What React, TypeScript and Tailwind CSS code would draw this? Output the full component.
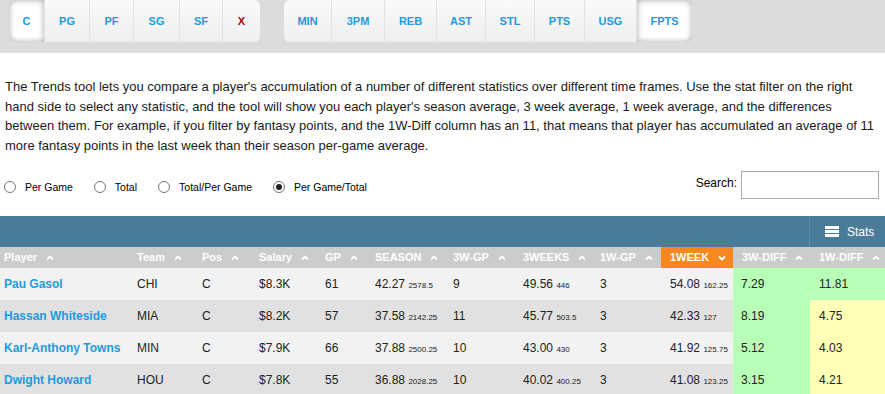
import React from "react";

type Row = {
  name: string;
  team: string;
  pos: string;
  salary: string;
  gp: string;
  season: [string, string];
  gp3: string;
  weeks3: [string, string];
  gp1: string;
  week1: [string, string];
  diff3: string;
  diff1: string;
  diff1Hot: boolean;
};

const rows: Row[] = [
  { name: "Pau Gasol", team: "CHI", pos: "C", salary: "$8.3K", gp: "61", season: ["42.27", "2578.5"], gp3: "9", weeks3: ["49.56", "446"], gp1: "3", week1: ["54.08", "162.25"], diff3: "7.29", diff1: "11.81", diff1Hot: true },
  { name: "Hassan Whiteside", team: "MIA", pos: "C", salary: "$8.2K", gp: "57", season: ["37.58", "2142.25"], gp3: "11", weeks3: ["45.77", "503.5"], gp1: "3", week1: ["42.33", "127"], diff3: "8.19", diff1: "4.75", diff1Hot: false },
  { name: "Karl-Anthony Towns", team: "MIN", pos: "C", salary: "$7.9K", gp: "66", season: ["37.88", "2500.25"], gp3: "10", weeks3: ["43.00", "430"], gp1: "3", week1: ["41.92", "125.75"], diff3: "5.12", diff1: "4.03", diff1Hot: false },
  { name: "Dwight Howard", team: "HOU", pos: "C", salary: "$7.8K", gp: "55", season: ["36.88", "2028.25"], gp3: "10", weeks3: ["40.02", "400.25"], gp1: "3", week1: ["41.08", "123.25"], diff3: "3.15", diff1: "4.21", diff1Hot: false },
];

const positions = [
  { label: "C", w: "w-[36px]", active: true },
  { label: "PG", w: "w-[45px]" },
  { label: "PF", w: "w-[44px]" },
  { label: "SG", w: "w-[46px]" },
  { label: "SF", w: "w-[43px]" },
  { label: "X", w: "w-[37px]", red: true },
];

const stats = [
  { label: "MIN", w: "w-[48px]" },
  { label: "3PM", w: "w-[53px]" },
  { label: "REB", w: "w-[52px]" },
  { label: "AST", w: "w-[49px]" },
  { label: "STL", w: "w-[49px]" },
  { label: "PTS", w: "w-[50px]" },
  { label: "USG", w: "w-[52px]" },
  { label: "FPTS", w: "w-[55px]", active: true },
];

const headers = ["Player", "Team", "Pos", "Salary", "GP", "SEASON", "3W-GP", "3WEEKS", "1W-GP", "1WEEK", "3W-DIFF", "1W-DIFF"];

const grid = "grid grid-cols-[128px_65px_57px_66px_50px_78px_70px_77px_70px_72px_77px_75px]";

function Caret({ down }: { down?: boolean }) {
  return (
    <svg width="8" height="6" viewBox="0 0 8 6" className="ml-[9px] shrink-0">
      <path d={down ? "M1 1.5 L4 4.5 L7 1.5" : "M1 4.5 L4 1.5 L7 4.5"} fill="none" stroke="white" strokeWidth="1.8" />
    </svg>
  );
}

function FilterButton({ label, w, active, red, first, last }: { label: string; w: string; active?: boolean; red?: boolean; first?: boolean; last?: boolean }) {
  return (
    <div
      className={`${w} h-full flex items-center justify-center text-[11px] font-bold ${red ? "text-[#b30000]" : "text-[#1e9ae0]"} ${
        active ? "bg-white shadow-[inset_0_0_6px_rgba(0,0,0,0.35)]" : "bg-gradient-to-b from-[#fafafa] to-[#efefef]"
      } ${first ? "rounded-l-[6px]" : ""} ${last ? "rounded-r-[6px]" : ""} ${!last ? "border-r border-[#e2e2e2]" : ""}`}
    >
      {label}
    </div>
  );
}

function Val({ v }: { v: [string, string] }) {
  return (
    <span>
      {v[0]} <span className="text-[8px]">{v[1]}</span>
    </span>
  );
}

export default function App() {
  return (
    <div className="w-[885px] h-[394px] overflow-hidden bg-white font-['Liberation_Sans',Arial,sans-serif] text-[#222]">
      {/* filter bar */}
      <div className="h-[53px] bg-[#dcdcdc] flex items-start pl-[9px]">
        <div className="flex h-[42px]">
          {positions.map((p, i) => (
            <FilterButton key={p.label} {...p} first={i === 0} last={i === positions.length - 1} />
          ))}
        </div>
        <div className="flex h-[42px] ml-[24px]">
          {stats.map((s, i) => (
            <FilterButton key={s.label} {...s} first={i === 0} last={i === stats.length - 1} />
          ))}
        </div>
      </div>

      {/* description */}
      <p className="mt-[24px] px-[5px] text-[13px] leading-[19.5px] text-[#1a1a1a]">
        The Trends tool lets you compare a player's accumulation of a number of different statistics over different time frames. Use the stat filter on the right hand side to select any statistic, and the tool will show you each player's season average, 3 week average, 1 week average, and the differences between them. For example, if you filter by fantasy points, and the 1W-Diff column has an 11, that means that player has accumulated an average of 11 more fantasy points in the last week than their season per-game average.
      </p>

      {/* options */}
      <div className="flex items-center justify-between mt-[16px] h-[28px] pr-[6px]">
        <div className="flex items-center gap-[21px] text-[10.5px] text-black pl-[4px] mt-[3px]">
          {["Per Game", "Total", "Total/Per Game", "Per Game/Total"].map((l, i) => (
            <label key={l} className="flex items-center">
              <span className="w-[12px] h-[12px] rounded-full border border-[#777] bg-white flex items-center justify-center">
                {i === 3 && <span className="w-[6px] h-[6px] rounded-full bg-[#222]" />}
              </span>
              <span className="ml-[9px] mt-[2px]">{l}</span>
            </label>
          ))}
        </div>
        <div className="flex items-center text-[12px] text-black">
          <span className="mr-[4px] mb-[4px]">Search:</span>
          <div className="w-[138px] h-[28px] border border-[#aaa] bg-white" />
        </div>
      </div>

      {/* table toolbar */}
      <div className="mt-[17px] h-[31px] bg-[#4a7c99] flex justify-end">
        <div className="w-[76px] border-l border-[#5f8da8] flex items-center pl-[15px] text-white text-[12px]">
          <svg width="14" height="11" viewBox="0 0 14 11" className="mr-[8px]">
            <rect x="0" y="0" width="14" height="3" fill="white" />
            <rect x="0" y="4" width="14" height="3" fill="white" />
            <rect x="0" y="8" width="14" height="3" fill="white" />
          </svg>
          Stats
        </div>
      </div>

      {/* header */}
      <div className={`${grid} h-[21px] bg-[#cccccc] text-white text-[11px] font-bold`}>
        {headers.map((h, i) => (
          <div key={h} className={`flex items-center ${i === 0 ? "pl-[4px]" : "pl-[9px]"} ${h === "1WEEK" ? "bg-[#f5891f]" : ""}`}>
            {h}
            <Caret down={h === "1WEEK"} />
          </div>
        ))}
      </div>

      {/* rows */}
      {rows.map((r, ri) => (
        <div key={r.name} className={`${grid} h-[32px] text-[12px] ${ri % 2 === 0 ? "bg-[#f2f2f2]" : "bg-[#e1e1e1]"}`}>
          <div className="flex items-center pl-[4px] font-bold text-[#1e9ae0] whitespace-nowrap">{r.name}</div>
          <div className="flex items-center pl-[9px]">{r.team}</div>
          <div className="flex items-center pl-[9px]">{r.pos}</div>
          <div className="flex items-center pl-[9px]">{r.salary}</div>
          <div className="flex items-center pl-[9px]">{r.gp}</div>
          <div className="flex items-center pl-[9px] whitespace-nowrap"><Val v={r.season} /></div>
          <div className="flex items-center pl-[9px]">{r.gp3}</div>
          <div className="flex items-center pl-[9px] whitespace-nowrap"><Val v={r.weeks3} /></div>
          <div className="flex items-center pl-[9px]">{r.gp1}</div>
          <div className="flex items-center pl-[9px] whitespace-nowrap"><Val v={r.week1} /></div>
          <div className="flex items-center pl-[8px] bg-[#b8ffb8]">{r.diff3}</div>
          <div className={`flex items-center pl-[9px] ${r.diff1Hot ? "bg-[#b8ffb8]" : "bg-[#ffffb8]"}`}>{r.diff1}</div>
        </div>
      ))}
    </div>
  );
}
